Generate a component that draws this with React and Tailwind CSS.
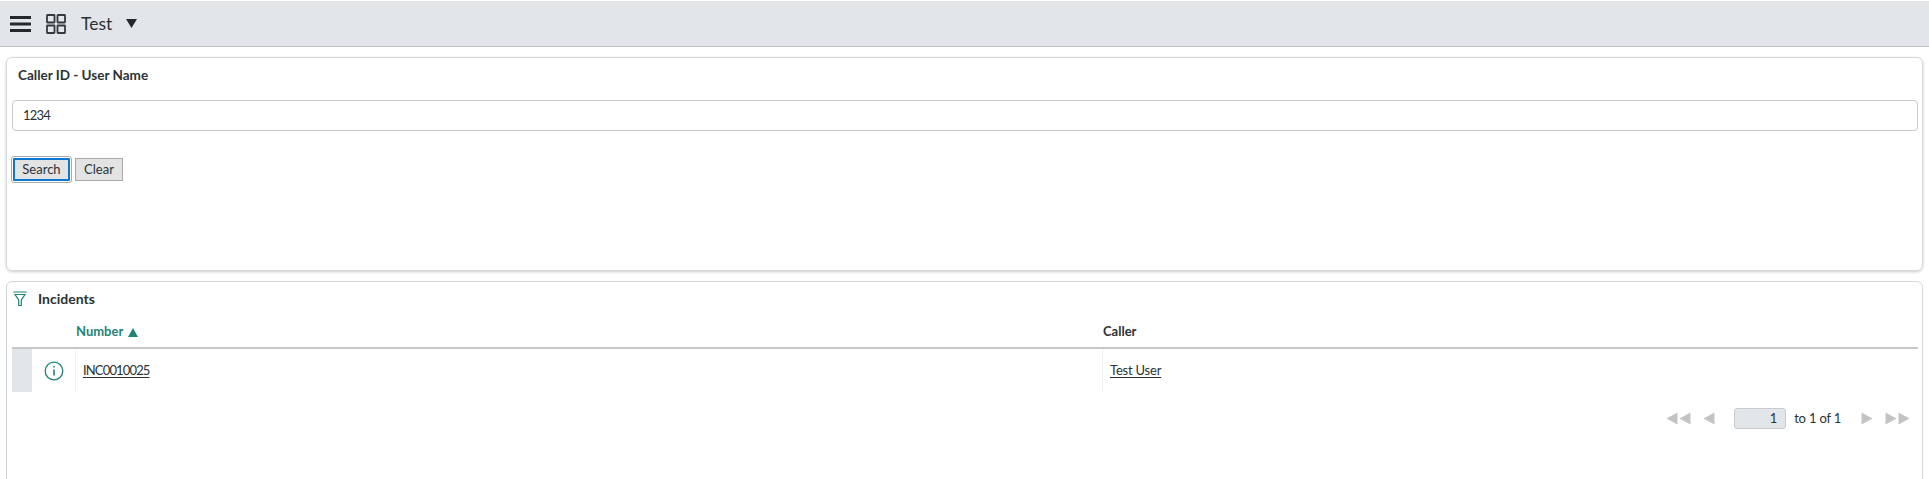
import React from 'react';

const Triangle = ({ points, className }) => (
    <svg width="12" height="13" viewBox="0 0 12 13" className={className}>
        <polygon points={points} fill="currentColor" />
    </svg>
);

const LEFT = '11.5,0.5 11.5,12.5 0.5,6.5';
const RIGHT = '0.5,0.5 0.5,12.5 11.5,6.5';

const App = () => {
    return (
        <div className="h-[479px] w-[1929px] overflow-hidden bg-white font-['Lato',sans-serif] text-[#2a3236]">
            {/* Top bar */}
            <div className="mt-px flex h-[46px] items-center border-b border-[#bdc0c4] bg-[#e3e6e9] pl-[10px]">
                <svg width="22" height="16" viewBox="0 0 22 16" className="text-[#23282c]">
                    <path d="M0 1.5h21M0 8h21M0 14.5h21" stroke="currentColor" strokeWidth="3" />
                </svg>
                <svg width="20" height="20" viewBox="0 0 20 20" fill="none" stroke="#33393d" strokeWidth="1.8" className="ml-[14px]">
                    <rect x="1" y="1" width="7.5" height="7.5" rx="0.5" />
                    <rect x="11.5" y="1" width="7.5" height="7.5" rx="0.5" />
                    <rect x="1" y="11.5" width="7.5" height="7.5" rx="0.5" />
                    <rect x="11.5" y="11.5" width="7.5" height="7.5" rx="0.5" />
                </svg>
                <span className="ml-[15px] text-[17.5px] leading-none">Test</span>
                <svg width="11" height="9" viewBox="0 0 11 9" className="ml-[14px] text-[#23282c]">
                    <polygon points="0,0 11,0 5.5,9" fill="currentColor" />
                </svg>
            </div>

            <div className="flex flex-col gap-[10px] px-[6px] pt-[10px]">
                {/* Search card */}
                <div className="h-[214px] rounded-[6px] border border-[#d5d7d9] shadow-[0_1px_3px_rgba(0,0,0,0.2)]">
                    <div className="pl-[11px] pt-[8px] text-[13.5px] font-bold leading-[18px]">Caller ID - User Name</div>
                    <div className="ml-[5px] mr-[4px] mt-[16px] flex h-[31px] items-center rounded-[4px] border border-[#c8cacc] pl-[10px] text-[13px] tracking-[-0.8px]">
                        1234
                    </div>
                    <div className="ml-[6px] mt-[27px] flex items-center gap-[5px]">
                        <button className="h-[23px] w-[57px] rounded-[1px] border-2 border-[#0f76d2] bg-[#e3e3e3] text-[13px] leading-none outline outline-1 outline-offset-1 outline-[#a9a9a9]">
                            Search
                        </button>
                        <button className="h-[23px] w-[48px] border border-[#aaaaaa] bg-[#e3e3e3] text-[13px] leading-none">
                            Clear
                        </button>
                    </div>
                </div>

                {/* Incidents card */}
                <div className="h-[220px] rounded-[6px] border border-[#d5d7d9] pl-[5px] pr-[4px]">
                    <div className="flex h-[33px] items-center">
                        <svg width="16" height="16" viewBox="0 0 15 16" fill="none" stroke="#1f8476" strokeWidth="1.2">
                            <path d="M0.8 1h13.4M2.5 3.5h10L8.8 9v5.5H6.2V9z" />
                        </svg>
                        <span className="ml-[10px] text-[14px] font-bold leading-none">Incidents</span>
                    </div>

                    {/* List header */}
                    <div className="flex h-[34px] items-center border-b-2 border-[#c8c8c8] pt-[2px] text-[13px] font-bold">
                        <div className="flex w-[1091px] items-center pl-[64px] text-[#1f8476]">
                            Number
                            <svg width="10" height="9" viewBox="0 0 10 9" className="ml-[5px]">
                                <polygon points="0,9 10,9 5,0" fill="currentColor" />
                            </svg>
                        </div>
                        <div>Caller</div>
                    </div>

                    {/* Row */}
                    <div className="flex h-[43px] items-stretch text-[13px]">
                        <div className="w-[20px] bg-[#e3e6e9]" />
                        <div className="flex w-[44px] items-center justify-center border-r border-[#f0f0f0]">
                            <svg width="20" height="20" viewBox="0 0 20 20" fill="none" stroke="#1f8476" strokeWidth="1.3">
                                <circle cx="10" cy="10" r="8.8" />
                                <path d="M10 8.5v6" strokeWidth="1.6" />
                                <path d="M10 5v1.6" strokeWidth="1.6" />
                            </svg>
                        </div>
                        <div className="flex w-[1027px] items-center border-r border-[#f0f0f0] pl-[7px]">
                            <a className="underline underline-offset-2 tracking-[-0.85px]">INC0010025</a>
                        </div>
                        <div className="flex items-center pl-[7px]">
                            <a className="underline underline-offset-2 tracking-[-0.2px]">Test User</a>
                        </div>
                    </div>

                    {/* Pagination */}
                    <div className="mt-[16px] flex items-center justify-end pr-[8px] text-[13px]">
                        <div className="flex items-center text-[#c3c3c3]">
                            <Triangle points={LEFT} />
                            <Triangle points={LEFT} className="ml-px" />
                            <Triangle points={LEFT} className="ml-[12px]" />
                        </div>
                        <div className="ml-[19px] flex h-[21px] w-[52px] items-center justify-end rounded-[3px] border border-[#c8cacc] bg-[#e3e6e9] pr-[8px]">
                            1
                        </div>
                        <span className="ml-[8px] tracking-[-0.2px]">to 1 of 1</span>
                        <div className="ml-[20px] flex items-center text-[#c3c3c3]">
                            <Triangle points={RIGHT} />
                            <Triangle points={RIGHT} className="ml-[12px]" />
                            <Triangle points={RIGHT} className="ml-px" />
                        </div>
                    </div>
                </div>
            </div>
        </div>
    );
};

export default App;
